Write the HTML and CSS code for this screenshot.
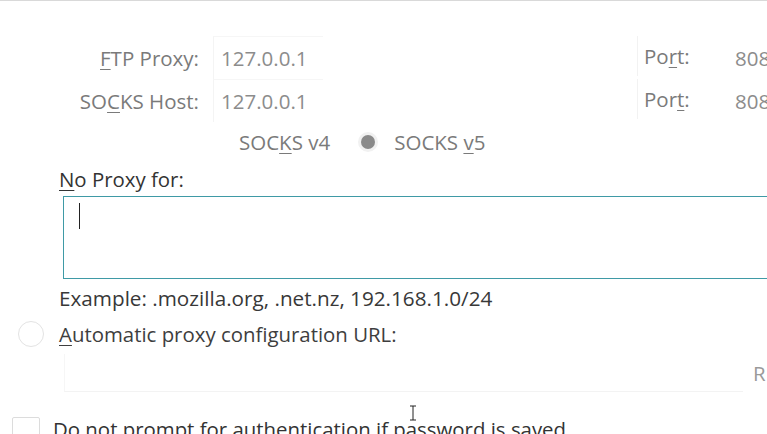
FILE: index.html
```html
<!DOCTYPE html>
<html>
<head>
<meta charset="utf-8">
<link rel="stylesheet" href="styles.css">
</head>
<body>
<div class="page">
  <div class="proxy-grid">
    <div class="lbl"><u>F</u>TP Proxy:</div>
    <div class="field"><span>127.0.0.1</span></div>
    <div></div>
    <div class="port-lbl">Po<u>r</u>t:</div>
    <div class="port-field">808</div>

    <div class="lbl">SO<u>C</u>KS Host:</div>
    <div class="field"><span>127.0.0.1</span></div>
    <div></div>
    <div class="port-lbl">Por<u>t</u>:</div>
    <div class="port-field">808</div>
  </div>

  <div class="socks-row">
    <span class="dis">SOC<u>K</u>S v4</span>
    <span class="radio-dot"></span>
    <span class="dis">SOCKS <u>v</u>5</span>
  </div>

  <div class="noproxy-lbl"><u>N</u>o Proxy for:</div>
  <div class="textarea"><span class="caret"></span></div>
  <div class="example">Example: .mozilla.org, .net.nz, 192.168.1.0/24</div>

  <div class="auto-row">
    <span class="radio"></span>
    <span class="auto-lbl"><u>A</u>utomatic proxy configuration URL:</span>
  </div>
  <div class="auto-input-row">
    <div class="auto-input"></div>
    <span class="reload">R</span>
  </div>

  <div class="check-row">
    <span class="checkbox"></span>
    <span class="check-lbl">Do not prompt for authentication if password is saved</span>
  </div>

  <svg class="ibeam" width="8" height="16" viewBox="0 0 8 16">
    <path d="M1 1h6M1 15h6M4 1v14" stroke="#fff" stroke-width="3" fill="none"/>
    <path d="M1 1h6M1 15h6M4 1v14" stroke="#222" stroke-width="1" fill="none"/>
  </svg>
</div>
</body>
</html>
```
FILE: styles.css
```css
html, body {
  margin: 0;
  padding: 0;
  background: #fff;
}
body {
  width: 767px;
  height: 434px;
  overflow: hidden;
  font-family: "Open Sans", "Noto Sans", sans-serif;
  font-size: 20.4px;
  color: #3b3b3b;
}
u {
  text-decoration-thickness: 1px;
  text-underline-offset: 3px;
}
.page {
  position: relative;
  height: 434px;
  border-top: 1px solid #d9d9d9;
  box-sizing: border-box;
}
.proxy-grid {
  display: grid;
  grid-template-columns: 199px 110px 286px 56px 80px;
  column-gap: 14px;
  grid-auto-rows: 43px;
  padding-top: 35px;
  white-space: nowrap;
  font-size: 20.5px;
}
.proxy-grid > div {
  display: flex;
  align-items: center;
}
.lbl {
  justify-content: flex-end;
  color: #7a7a7a;
}
.field {
  color: #8c8c8c;
  padding-left: 7px;
  border-left: 1px solid #f4f4f4;
  border-top: 1px solid #f6f6f6;
}
.port-lbl {
  color: #7a7a7a;
  padding-left: 6px;
  border-left: 1px solid #f2f2f2;
  box-sizing: border-box;
  height: 40px;
}
.port-field {
  color: #8c8c8c;
  padding-left: 28px;
}
.socks-row {
  display: flex;
  align-items: center;
  height: 40px;
  padding-left: 239px;
  color: #7a7a7a;
  font-size: 20.5px;
}
.radio-dot {
  width: 14px;
  height: 14px;
  border-radius: 50%;
  background: #8a8a8a;
  box-shadow: 0 0 0 3px #f1f1f1;
  margin: 0 19px 0 31px;
}
.noproxy-lbl {
  height: 34px;
  line-height: 34px;
  padding-left: 59px;
  color: #333;
}
.textarea {
  margin-left: 63px;
  height: 83px;
  border: 1px solid #3f9aa6;
  border-right: none;
  box-sizing: border-box;
  padding: 6px 0 0 15px;
}
.caret {
  display: block;
  width: 1px;
  height: 26px;
  background: #222;
}
.example {
  padding-left: 59px;
  height: 38px;
  line-height: 38px;
  color: #383838;
  font-size: 20.7px;
}
.auto-row {
  display: flex;
  align-items: center;
  height: 34px;
  padding-left: 18px;
}
.radio {
  width: 26px;
  height: 26px;
  border: 1px solid #e3e3e3;
  border-radius: 50%;
  box-sizing: border-box;
  margin-right: 15px;
}
.auto-lbl {
  color: #3e3e3e;
}
.auto-input-row {
  display: flex;
  align-items: center;
  margin-top: 3px;
  height: 38px;
}
.auto-input {
  margin-left: 64px;
  flex: 1;
  align-self: stretch;
  border-left: 1px solid #f6f6f6;
  border-bottom: 1px solid #f3f3f3;
  margin-right: 10px;
}
.reload {
  color: #9a9a9a;
  width: 14px;
}
.check-row {
  display: flex;
  align-items: flex-start;
  padding-left: 12px;
  margin-top: 25px;
}
.checkbox {
  width: 28px;
  height: 28px;
  border: 1px solid #dcdcdc;
  border-radius: 2px;
  box-sizing: border-box;
  margin-right: 13px;
}
.check-lbl {
  color: #333;
  line-height: 24px;
  white-space: nowrap;
}
.ibeam {
  position: absolute;
  left: 409px;
  top: 404px;
}
```
